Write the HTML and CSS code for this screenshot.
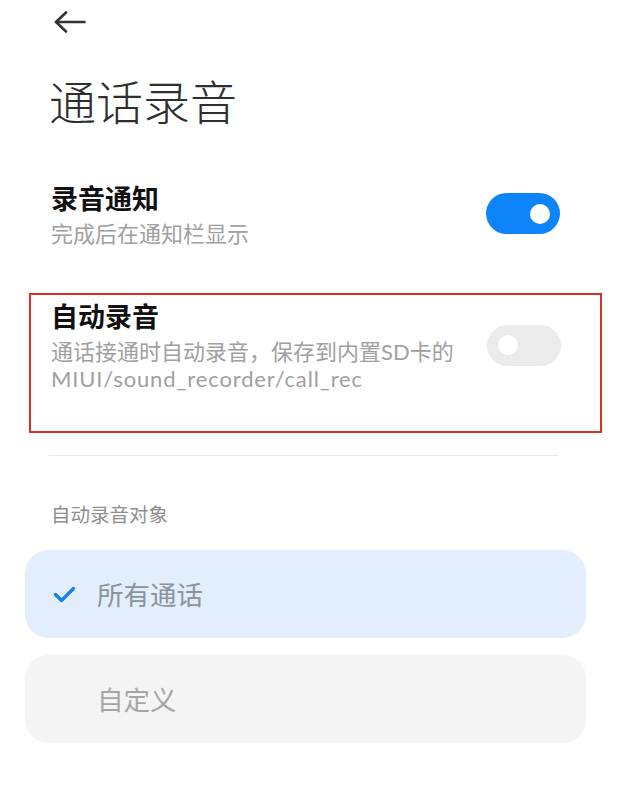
FILE: index.html
```html
<!DOCTYPE html>
<html lang="zh-CN">
<head>
<meta charset="utf-8">
<title>通话录音</title>
<link rel="stylesheet" href="styles.css">
</head>
<body>
<div class="page">
  <header class="topbar">
    <button class="back" type="button" aria-label="返回">
      <svg width="32" height="22" viewBox="0 0 32 22" fill="none" stroke="#333" stroke-width="2.6" stroke-linecap="round" stroke-linejoin="round">
        <path d="M2 11 H30.5"/>
        <path d="M12 1.5 L2 11 L12 20.5"/>
      </svg>
    </button>
  </header>

  <h1 class="title">通话录音</h1>

  <section class="settings">
    <div class="row">
      <div class="row-text">
        <div class="row-title">录音通知</div>
        <div class="row-desc">完成后在通知栏显示</div>
      </div>
      <span class="switch on"><span class="knob"></span></span>
    </div>

    <div class="row row-flagged">
      <div class="row-text">
        <div class="row-title">自动录音</div>
        <div class="row-desc">通话接通时自动录音，保存到内置SD卡的<br><span class="path">MIUI/sound_recorder/call_rec</span></div>
      </div>
      <span class="switch"><span class="knob"></span></span>
    </div>
  </section>

  <hr class="divider">

  <div class="group-label">自动录音对象</div>

  <ul class="options">
    <li class="option selected">
      <svg class="check" width="23" height="17" viewBox="0 0 23 17" fill="none" stroke="#1a7fe8" stroke-width="3.4" stroke-linecap="round" stroke-linejoin="round">
        <path d="M2.5 8.5 L8.5 14.5 L20.5 2.5"/>
      </svg>
      <span class="option-text">所有通话</span>
    </li>
    <li class="option">
      <span class="check-space"></span>
      <span class="option-text">自定义</span>
    </li>
  </ul>
</div>
</body>
</html>
```

FILE: styles.css
```css
* {
  box-sizing: border-box;
}

html, body {
  margin: 0;
  padding: 0;
  background: #ffffff;
}

body {
  font-family: "Noto Sans CJK SC", "Noto Sans", sans-serif;
  color: #111;
}

.page {
  width: 626px;
  min-height: 799px;
}

/* top bar with the back arrow */
.topbar {
  padding: 11px 0 0 54px;
  height: 33px;
}

.back {
  display: block;
  padding: 0;
  margin: 0;
  border: 0;
  background: none;
  width: 32px;
  height: 22px;
}

.back svg {
  display: block;
}

.title {
  margin: 39px 0 0 49px;
  font-size: 47px;
  line-height: 56px;
  font-weight: 300;
  color: #2e2e2e;
  letter-spacing: 0;
}

/* switch rows */
.settings {
  margin-top: 52px;
}

.row {
  display: flex;
  align-items: center;
  justify-content: space-between;
  padding: 0 66px 0 51px;
}

.row-title {
  font-size: 27px;
  line-height: 36px;
  font-weight: 700;
  color: #111;
}

.row-desc {
  margin-top: 3px;
  padding-top: 1px;
  font-family: "Lato", "Noto Sans CJK SC", sans-serif;
  font-size: 22px;
  line-height: 27px;
  color: #a0a0a0;
}

.row-desc .path {
  letter-spacing: 0.85px;
}

.row-flagged {
  margin: 46px 24px 0 29px;
  border: 2px solid #db2f2a;
  padding: 3px 39px 39px 20px;
}

.switch {
  position: relative;
  flex: none;
  width: 74px;
  height: 41px;
  border-radius: 21px;
  background: #ebebeb;
}

.switch .knob {
  position: absolute;
  top: 10.5px;
  left: 11px;
  width: 20px;
  height: 20px;
  border-radius: 50%;
  background: #fff;
}

.switch.on {
  background: #0d84f9;
}

.switch.on .knob {
  left: auto;
  right: 10px;
}

.divider {
  margin: 22px 68px 0 49px;
  border: 0;
  height: 1px;
  background: #e8e8e8;
}

.group-label {
  margin: 44px 0 0 51px;
  font-size: 19.5px;
  line-height: 27px;
  color: #8e8e8e;
}

/* option cards */
.options {
  list-style: none;
  margin: 23px 40px 0 25px;
  padding: 0;
  display: flex;
  flex-direction: column;
  gap: 17px;
}

.option {
  display: flex;
  align-items: center;
  gap: 21px;
  height: 88px;
  padding-left: 28px;
  border-radius: 24px;
  background: #f4f4f4;
  box-shadow: 0 0 2px rgba(0, 0, 0, 0.03);
}

.option.selected {
  background: #e2eefc;
}

.check,
.check-space {
  display: block;
  flex: none;
  width: 23px;
  height: 17px;
}

.option-text {
  font-size: 26.5px;
  line-height: 34px;
  color: #a5a5a5;
}

.option.selected .option-text {
  color: #8b939c;
}
```
